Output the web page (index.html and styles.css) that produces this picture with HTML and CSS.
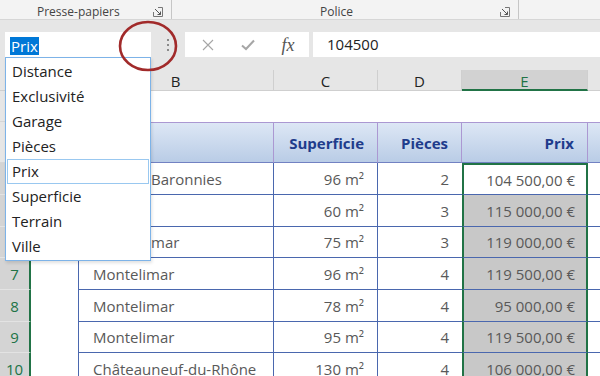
FILE: index.html
```html
<!DOCTYPE html>
<html lang="fr">
<head>
  <meta charset="UTF-8" />
  <title>Liste des noms - Prix</title>
  <link rel="stylesheet" href="styles.css">
</head>
<body>

<!-- Ribbon group labels -->
<div class="ribbon">
  <div class="group group-clip">
    <span class="group-label">Presse-papiers</span>
    <svg class="launcher" width="10" height="10" viewBox="0 0 10 10">
      <path d="M0.5 5 V9.5 H9.5 V0.5 H5" fill="none" stroke="#777" stroke-width="1"/>
      <path d="M2 2 L7.5 7.5 M7.5 4.5 V7.5 H4.5" fill="none" stroke="#555" stroke-width="1"/>
    </svg>
  </div>
  <div class="group group-font">
    <span class="group-label">Police</span>
    <svg class="launcher" width="10" height="10" viewBox="0 0 10 10">
      <path d="M0.5 5 V9.5 H9.5 V0.5 H5" fill="none" stroke="#777" stroke-width="1"/>
      <path d="M2 2 L7.5 7.5 M7.5 4.5 V7.5 H4.5" fill="none" stroke="#555" stroke-width="1"/>
    </svg>
  </div>
</div>

<!-- Formula bar -->
<div class="formula-bar">
  <div class="name-box"><span class="name-sel">Prix</span></div>
  <div class="grip"><i></i><i></i><i></i></div>
  <div class="fx-buttons">
    <svg width="12" height="12" viewBox="0 0 12 12">
      <path d="M1 1 L11 11 M11 1 L1 11" stroke="#a6a6a6" stroke-width="1.1"/>
    </svg>
    <svg width="14" height="12" viewBox="0 0 14 12">
      <path d="M1 6.5 L5 10 L13 1.5" fill="none" stroke="#a6a6a6" stroke-width="2"/>
    </svg>
    <span class="fx">fx</span>
  </div>
  <div class="formula-input">104500</div>
</div>

<!-- Sheet (rows 2-6 headers and column A sit under the dropdown) -->
<div class="sheet">
  <!-- column headers -->
  <div class="corner"></div>
  <div class="ch"></div>
  <div class="ch">B</div>
  <div class="ch">C</div>
  <div class="ch">D</div>
  <div class="ch ch-sel">E</div>
  <div class="ch ch-last"></div>

  <!-- row 2 -->
  <div class="rh"></div>
  <div class="cell"></div><div class="cell"></div><div class="cell"></div>
  <div class="cell"></div><div class="cell"></div><div class="cell"></div>

  <!-- row 3 : table headings -->
  <div class="rh"></div>
  <div class="cell"></div>
  <div class="th th-first"></div>
  <div class="th num">Superficie</div>
  <div class="th num">Pièces</div>
  <div class="th num">Prix</div>
  <div class="th th-last"></div>

  <!-- row 4 -->
  <div class="rh rh-sel"></div>
  <div class="cell"></div>
  <div class="td td-first td-hidden">Baronnies</div>
  <div class="td num">96 m²</div>
  <div class="td num td-d">2</div>
  <div class="td num sel sel-active">104 500,00 €</div>
  <div class="td td-last"></div>

  <!-- row 5 -->
  <div class="rh rh-sel"></div>
  <div class="cell"></div>
  <div class="td td-first"></div>
  <div class="td num">60 m²</div>
  <div class="td num td-d">3</div>
  <div class="td num sel">115 000,00 €</div>
  <div class="td td-last"></div>

  <!-- row 6 -->
  <div class="rh rh-sel"></div>
  <div class="cell"></div>
  <div class="td td-first td-hidden">mar</div>
  <div class="td num">75 m²</div>
  <div class="td num td-d">3</div>
  <div class="td num sel">119 000,00 €</div>
  <div class="td td-last"></div>

  <!-- row 7 -->
  <div class="rh rh-sel">7</div>
  <div class="cell"></div>
  <div class="td td-first">Montelimar</div>
  <div class="td num">96 m²</div>
  <div class="td num td-d">4</div>
  <div class="td num sel">119 500,00 €</div>
  <div class="td td-last"></div>

  <!-- row 8 -->
  <div class="rh rh-sel">8</div>
  <div class="cell"></div>
  <div class="td td-first">Montelimar</div>
  <div class="td num">78 m²</div>
  <div class="td num td-d">4</div>
  <div class="td num sel">95 000,00 €</div>
  <div class="td td-last"></div>

  <!-- row 9 -->
  <div class="rh rh-sel">9</div>
  <div class="cell"></div>
  <div class="td td-first">Montelimar</div>
  <div class="td num">95 m²</div>
  <div class="td num td-d">4</div>
  <div class="td num sel">119 500,00 €</div>
  <div class="td td-last"></div>

  <!-- row 10 -->
  <div class="rh rh-sel">10</div>
  <div class="cell"></div>
  <div class="td td-first">Châteauneuf-du-Rhône</div>
  <div class="td num">130 m²</div>
  <div class="td num td-d">4</div>
  <div class="td num sel">106 000,00 €</div>
  <div class="td td-last"></div>
</div>

<!-- Name box dropdown -->
<ul class="name-list">
  <li>Distance</li>
  <li>Exclusivité</li>
  <li>Garage</li>
  <li>Pièces</li>
  <li class="is-current">Prix</li>
  <li>Superficie</li>
  <li>Terrain</li>
  <li>Ville</li>
</ul>

<!-- Red annotation circle -->
<svg class="mark" width="62" height="54" viewBox="0 0 62 54">
  <ellipse cx="31" cy="27" rx="28" ry="24" fill="none" stroke="#a12a2a" stroke-width="2.6"/>
</svg>

</body>
</html>
```

FILE: styles.css
```css
* {
  box-sizing: border-box;
}
body {
  margin: 0;
  width: 600px;
  height: 376px;
  overflow: hidden;
  position: relative;
  font-family: 'Open Sans', 'Noto Sans', sans-serif;
  color: #222;
  background: #fff;
}

/* ribbon */
.ribbon {
  display: flex;
  height: 20px;
  background: #f3f3f3;
  border-bottom: 1px solid #d6d6d6;
  font-size: 12px;
  color: #444;
}
.group {
  display: flex;
  align-items: center;
  height: 19px;
  padding-top: 5px;
  border-right: 1px solid #c6c6c6;
}
.group-label { line-height: 14px; }
.group-clip { width: 172px; padding-left: 37px; }
.group-font { width: 347px; padding-left: 148px; }
.launcher {
  margin-left: auto;
  margin-right: 8px;
}

/* formula bar */
.formula-bar {
  display: flex;
  height: 50px;
  padding: 12px 0 13px 5px;
  background: #e6e6e6;
}
.name-box {
  width: 146px;
  background: #fff;
  padding: 4px 0 0 5px;
  font-size: 15px;
}
.name-sel {
  display: inline-block;
  background: #0078d7;
  color: #fff;
  line-height: 18px;
  padding: 0 1px;
}
.grip {
  width: 34px;
  display: flex;
  flex-direction: column;
  align-items: center;
  justify-content: center;
  gap: 3px;
}
.grip i {
  width: 2px;
  height: 2px;
  background: #8a8a8a;
}
.fx-buttons {
  width: 124px;
  background: #fff;
  display: grid;
  grid-template-columns: 40px 40px 40px;
  align-items: center;
  justify-items: center;
  padding-left: 3px;
}
.fx {
  font-family: 'Liberation Serif', serif;
  font-style: italic;
  font-size: 18px;
  color: #555;
  line-height: 1;
}
.formula-input {
  flex: 1;
  margin-left: 4px;
  background: #fff;
  padding-left: 14px;
  font-size: 15px;
  line-height: 25px;
}

/* sheet grid */
.sheet {
  display: grid;
  grid-template-columns: 31px 47px 196px 104px 84px 126px 1fr;
  grid-template-rows: 21px 31px 41px 32px 32px 31px 32px 32px 31px 32px;
  font-size: 15px;
}
.corner, .ch {
  background: #e6e6e6;
  border-right: 1px solid #cfcfcf;
  border-bottom: 1px solid #cfcfcf;
  display: flex;
  align-items: center;
  justify-content: center;
  padding-top: 2px;
  color: #222;
}
.ch-sel {
  background: #d2d2d2;
  color: #217346;
  border-bottom: 2px solid #217346;
}
.ch-last { border-right: none; }

.rh {
  background: #e6e6e6;
  border-right: 1px solid #c8c8c8;
  border-bottom: 1px solid #d6d6d6;
  display: flex;
  align-items: center;
  justify-content: center;
  color: #444;
}
.rh-sel {
  background: #d4d4d4;
  color: #217346;
  border-right: 2px solid #217346;
  border-bottom: 1px solid #e3e3e3;
}

.th, .td {
  display: flex;
  align-items: center;
  padding: 0 13px 0 14px;
  white-space: nowrap;
  overflow: hidden;
}
.num { justify-content: flex-end; }

.th {
  background: linear-gradient(#dde7f5, #b9cce6);
  border-top: 1px solid #ab98d2;
  border-right: 1px solid #ab98d2;
  border-bottom: 1px solid #7281c2;
  color: #1f3c8c;
  font-weight: 700;
}
.th-first { border-left: 1px solid #ab98d2; }
.th-last { border-right: none; }

.td {
  color: #595959;
  border-right: 1px solid #4a67ae;
  border-bottom: 1px solid #4a67ae;
}
.td-first { border-left: 1px solid #4a67ae; }
/* only the tail of these names shows to the right of the dropdown */
.td-hidden { padding-left: 72px; }
.td-d { border-right: none; }
.td-last { border-right: none; }

.sel {
  background: #c8c8c8;
  border-left: 2px solid #217346;
  border-right: 2px solid #217346;
  padding-right: 11px;
}
.sel-active {
  background: #fff;
  border-top: 2px solid #217346;
}

/* name box dropdown */
.name-list {
  position: absolute;
  left: 5px;
  top: 57px;
  width: 146px;
  margin: 0;
  padding: 1px 0;
  list-style: none;
  background: #fff;
  border: 1px solid #7db3e8;
  box-shadow: 1px 2px 3px rgba(0,0,0,0.12);
  font-size: 15px;
}
.name-list li {
  height: 25px;
  line-height: 25px;
  margin: 0 1px;
  padding-left: 5px;
  color: #222;
}
.name-list .is-current {
  border: 1px solid #99c8f0;
  line-height: 23px;
  padding-left: 4px;
}

/* annotation */
.mark {
  position: absolute;
  left: 117px;
  top: 19px;
}
```
